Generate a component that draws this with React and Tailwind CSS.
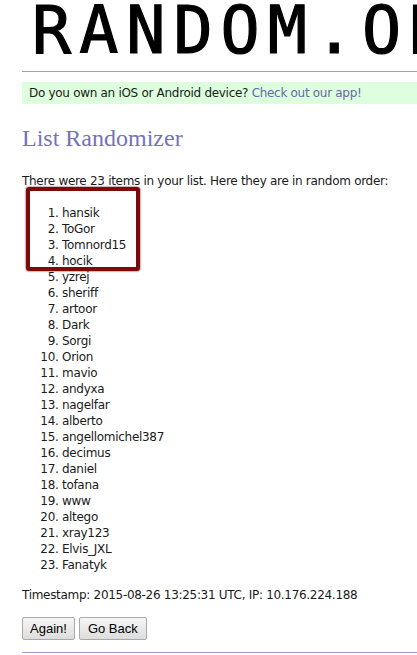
export default function App() {
  const items = [
    "hansik","ToGor","Tomnord15","hocik","yzrej","sheriff","artoor","Dark","Sorgi","Orion","mavio","andyxa","nagelfar","alberto","angellomichel387","decimus","daniel","tofana","www","altego","xray123","Elvis_JXL","Fanatyk",
  ];
  const body = { fontFamily: "Tahoma, 'DejaVu Sans', sans-serif" };
  const btn = { fontFamily: "'Liberation Sans', Arial, sans-serif" };
  return (
    <div className="w-[417px] h-[655px] overflow-hidden bg-white relative text-[#1a1a1a]">
      <div className="pl-[22px] w-[600px]">
        <div className="h-[71px] pl-[10px] leading-[62px] text-[65px] text-black tracking-[8px] whitespace-nowrap [-webkit-text-stroke:1.2px_#000]" style={{ fontFamily: "'DejaVu Sans Mono', monospace" }}>
          RANDOM.ORG
        </div>
        <div className="border-t border-[#9c9ccf]"></div>
        <div className="mt-[10px] h-[22px] bg-[#ddffdd] pl-[7px] leading-[22px] text-[12px] tracking-[-0.3px] whitespace-nowrap" style={body}>
          Do you own an iOS or Android device? <span className="text-[#6767ad]">Check out our app!</span>
        </div>
        <h2 className="mt-[20px] text-[24px] leading-[28px] text-[#7373b9]" style={{ fontFamily: "'Liberation Serif', serif" }}>List Randomizer</h2>
        <div style={body} className="text-[12px] tracking-[-0.3px]">
          <p className="mt-[21px] leading-[16px] whitespace-nowrap">There were 23 items in your list. Here they are in random order:</p>
          <ol className="mt-[16px] list-decimal pl-[40px] leading-[16px]">
            {items.map((it) => (
              <li key={it}>{it}</li>
            ))}
          </ol>
          <p className="mt-[14px] leading-[16px] whitespace-nowrap">Timestamp: 2015-08-26 13:25:31 UTC, IP: 10.176.224.188</p>
          <div className="mt-[14px] flex gap-[4px]">
            <button style={btn} className="h-[23px] px-[7px] border border-[#a9a9a9] rounded-[2px] bg-gradient-to-b from-[#f6f6f6] to-[#dddddd] text-[13px] tracking-normal text-black">Again!</button>
            <button style={btn} className="h-[23px] px-[8px] border border-[#a9a9a9] rounded-[2px] bg-gradient-to-b from-[#f6f6f6] to-[#dddddd] text-[13px] tracking-normal text-black">Go Back</button>
          </div>
        </div>
        <div className="mt-[12px] border-t border-[#9c9ccf]"></div>
      </div>
      <div className="absolute left-[26px] top-[187px] w-[114px] h-[84px] border-[4px] border-[#7c0a0a] rounded-[3px] shadow-[0_0_2px_#400]"></div>
    </div>
  );
}
